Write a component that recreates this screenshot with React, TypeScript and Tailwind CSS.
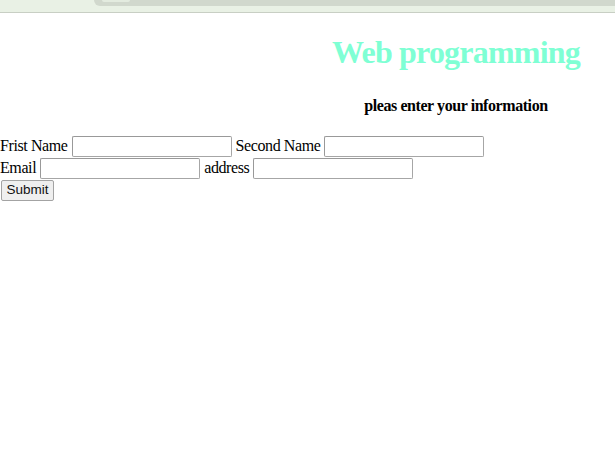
export default function App() {
  return (
    <div className="min-h-[460px] w-full bg-white font-['Liberation_Serif',serif] text-[16px] text-black">
      {/* browser chrome strip */}
      <div className="flex h-[13px] border-b border-[#c8cfc4] bg-[#e9f1e5]">
        <div className="ml-[94px] flex h-[6px] flex-1 rounded-bl-[8px] bg-[#d1d8cd]">
          <div className="ml-[8px] h-[2px] w-[28px] rounded-b-[3px] bg-[#e3ebdf]" />
        </div>
      </div>

      <div className="pl-[297px] text-center">
        <h1 className="mt-[21px] text-[32px] font-bold leading-[37px] tracking-[-0.8px] text-[#7fffd4]">Web programming</h1>
        <h4 className="mt-[26px] text-[16px] font-bold leading-[18px] tracking-[-0.43px]">pleas enter your information</h4>
      </div>

      <form className="mt-[20px] flex flex-col tracking-[-0.4px]" onSubmit={(e) => e.preventDefault()}>
        <div className="flex h-[22px] items-center gap-[4px] leading-[22px]">
          <span>Frist Name</span>
          <input className="h-[21px] w-[160px] rounded-[2px] border border-[#a6a6a6] border-t-[#999] border-l-[#999] bg-white" />
          <span>Second Name</span>
          <input className="h-[21px] w-[160px] rounded-[2px] border border-[#a6a6a6] border-t-[#999] border-l-[#999] bg-white" />
        </div>
        <div className="flex h-[22px] items-center gap-[4px] leading-[22px]">
          <span>Email</span>
          <input className="h-[21px] w-[160px] rounded-[2px] border border-[#a6a6a6] border-t-[#999] border-l-[#999] bg-white" />
          <span>address</span>
          <input className="h-[21px] w-[160px] rounded-[2px] border border-[#a6a6a6] border-t-[#999] border-l-[#999] bg-white" />
        </div>
        <div className="flex h-[22px] items-center">
          <button
            type="submit"
            className="ml-[1px] h-[21px] w-[53px] rounded-[2px] border border-[#a3a3a3] bg-[#efefef] font-['Liberation_Sans',sans-serif] text-[13.5px] leading-none tracking-normal text-[#111]"
          >
            Submit
          </button>
        </div>
      </form>
    </div>
  );
}
